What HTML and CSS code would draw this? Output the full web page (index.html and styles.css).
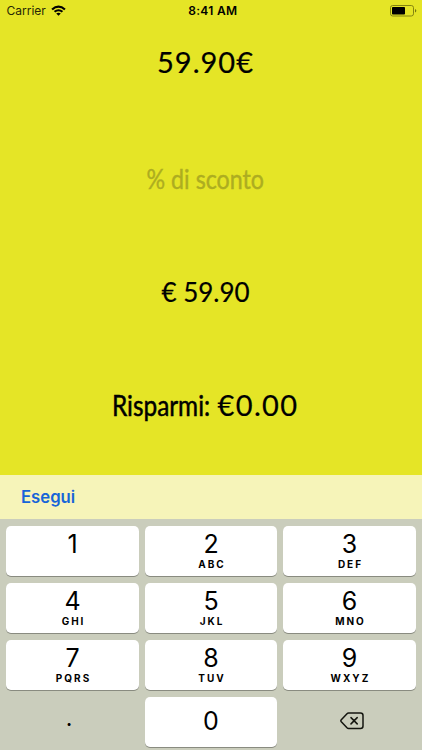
FILE: index.html
```html
<!DOCTYPE html>
<html lang="it">
<head>
<meta charset="utf-8">
<title>Sconto</title>
<link rel="stylesheet" href="styles.css">
</head>
<body>
<main class="screen">
  <header class="status">
    <div class="carrier"><span>Carrier</span>
      <svg width="15" height="11" viewBox="0 0 15 11"><path d="M0.3 3.7Q7.5-2.5 14.7 3.7L13.2 5.2Q7.5.3 1.8 5.2ZM2.8 6.1Q7.5 2.2 12.2 6.1L10.7 7.6Q7.5 5.1 4.3 7.6ZM5.2 8.5Q7.5 6.8 9.8 8.5L7.5 10.8Z"/></svg>
    </div>
    <div class="time">8:41 AM</div>
    <svg class="battery" width="27" height="12" viewBox="0 0 27 12"><rect x=".5" y=".5" width="23" height="10.5" rx="2.2" fill="none" stroke="#85850f"/><rect x="2" y="2" width="13" height="7.5" rx=".8"/><path d="M25 4Q27.7 5.7 25 7.6Z" fill="#77770f"/></svg>
  </header>
  <section class="values">
    <div class="line price"><span>59.90€</span></div>
    <div class="line discount"><span>% di sconto</span></div>
    <div class="line total"><span>€ 59.90</span></div>
    <div class="line saving"><span class="label">Risparmi:</span><span class="amount">€0.00</span></div>
  </section>
  <div class="toolbar"><span>Esegui</span></div>
  <section class="keypad">
    <div class="key"><b>1</b></div>
    <div class="key"><b>2</b><small>ABC</small></div>
    <div class="key"><b>3</b><small>DEF</small></div>
    <div class="key"><b>4</b><small>GHI</small></div>
    <div class="key"><b>5</b><small>JKL</small></div>
    <div class="key"><b>6</b><small>MNO</small></div>
    <div class="key"><b>7</b><small>PQRS</small></div>
    <div class="key"><b>8</b><small>TUV</small></div>
    <div class="key"><b>9</b><small>WXYZ</small></div>
    <div class="key plain dot"><b>.</b></div>
    <div class="key zero"><b>0</b></div>
    <div class="key plain erase"><svg width="24" height="18" viewBox="0 0 24 18" fill="none" stroke="#14150f" stroke-width="1.5" stroke-linecap="round" stroke-linejoin="round"><path d="M8.5 1H20.5Q23 1 23 3.5V14Q23 16.5 20.5 16.5H8.5Q7.7 16.5 7 15.8L1.3 9.8Q.4 8.8 1.3 7.8L7 1.7Q7.7 1 8.5 1ZM11 5.6L17.2 11.9M17.2 5.6L11 11.9"/></svg></div>
  </section>
</main>
</body>
</html>
```

FILE: styles.css
```css
* { box-sizing: border-box; }
body { margin: 0; }
.screen {
  width: 422px;
  height: 750px;
  overflow: hidden;
  display: flex;
  flex-direction: column;
  background: #e5e526;
  color: #000;
  font-family: Inter, "Liberation Sans", sans-serif;
}
.status {
  height: 22px;
  flex: none;
  display: grid;
  grid-template-columns: 1fr auto 1fr;
  align-items: center;
  padding: 0 5px 1px 6.5px;
  font-size: 12px;
}
.carrier { display: flex; align-items: center; gap: 5px; color: #282805; }
.carrier svg { fill: #000; }
.time { font-weight: 600; letter-spacing: .3px; margin-left: 2px; }
.battery { justify-self: end; }
.values { height: 452.5px; flex: none; font-family: Lato, "Open Sans", sans-serif; }
.line {
  height: 114px;
  display: flex;
  justify-content: center;
  line-height: 40px;
  white-space: nowrap;
  -webkit-text-stroke: .2px currentColor;
}
.line span { display: block; }
.price { padding-top: 20px; font-size: 29px; }
.price span { letter-spacing: 1px; margin-right: 11px; }
.discount { padding-top: 23px; font-size: 27px; color: #adad20; -webkit-text-stroke-width: .4px; }
.discount span { transform: scaleX(.86); margin-right: 11px; }
.total { padding-top: 22px; font-size: 26px; }
.total span { margin-right: 11px; }
.saving { padding-top: 21px; font-size: 28px; gap: 6px; padding-right: 11px; }
.saving .label { width: 99px; transform: scaleX(.87); transform-origin: left; -webkit-text-stroke-width: .5px; }
.saving .amount { font-size: 29px; letter-spacing: 1.4px; }
.toolbar {
  height: 44.5px;
  flex: none;
  display: flex;
  align-items: center;
  padding-left: 21px;
  background: #f6f4b9;
  color: #1765d8;
  font-size: 16.7px;
  font-weight: 600;
}
.keypad {
  flex: 1;
  display: grid;
  grid-template-columns: repeat(3, 1fr);
  grid-auto-rows: 50px;
  gap: 7px 6px;
  padding: 6.5px 6.3px 0;
  background: #cacdbc;
}
.key {
  display: flex;
  flex-direction: column;
  align-items: center;
  padding-top: 3px;
  border-radius: 5px;
  background: #fff;
  box-shadow: 0 1px 0 #898b80;
}
.key b { font-size: 25px; line-height: 30px; font-weight: 400; }
.key small { font-size: 10px; line-height: 11px; font-weight: 700; letter-spacing: 2px; margin-right: -2px; }
.zero { padding-top: 9px; }
.plain { background: none; box-shadow: none; padding-top: 15px; }
.dot { padding: 6px 7px 0 0; }
.dot b { font-size: 23px; }
.erase { padding-left: 6px; }
```
